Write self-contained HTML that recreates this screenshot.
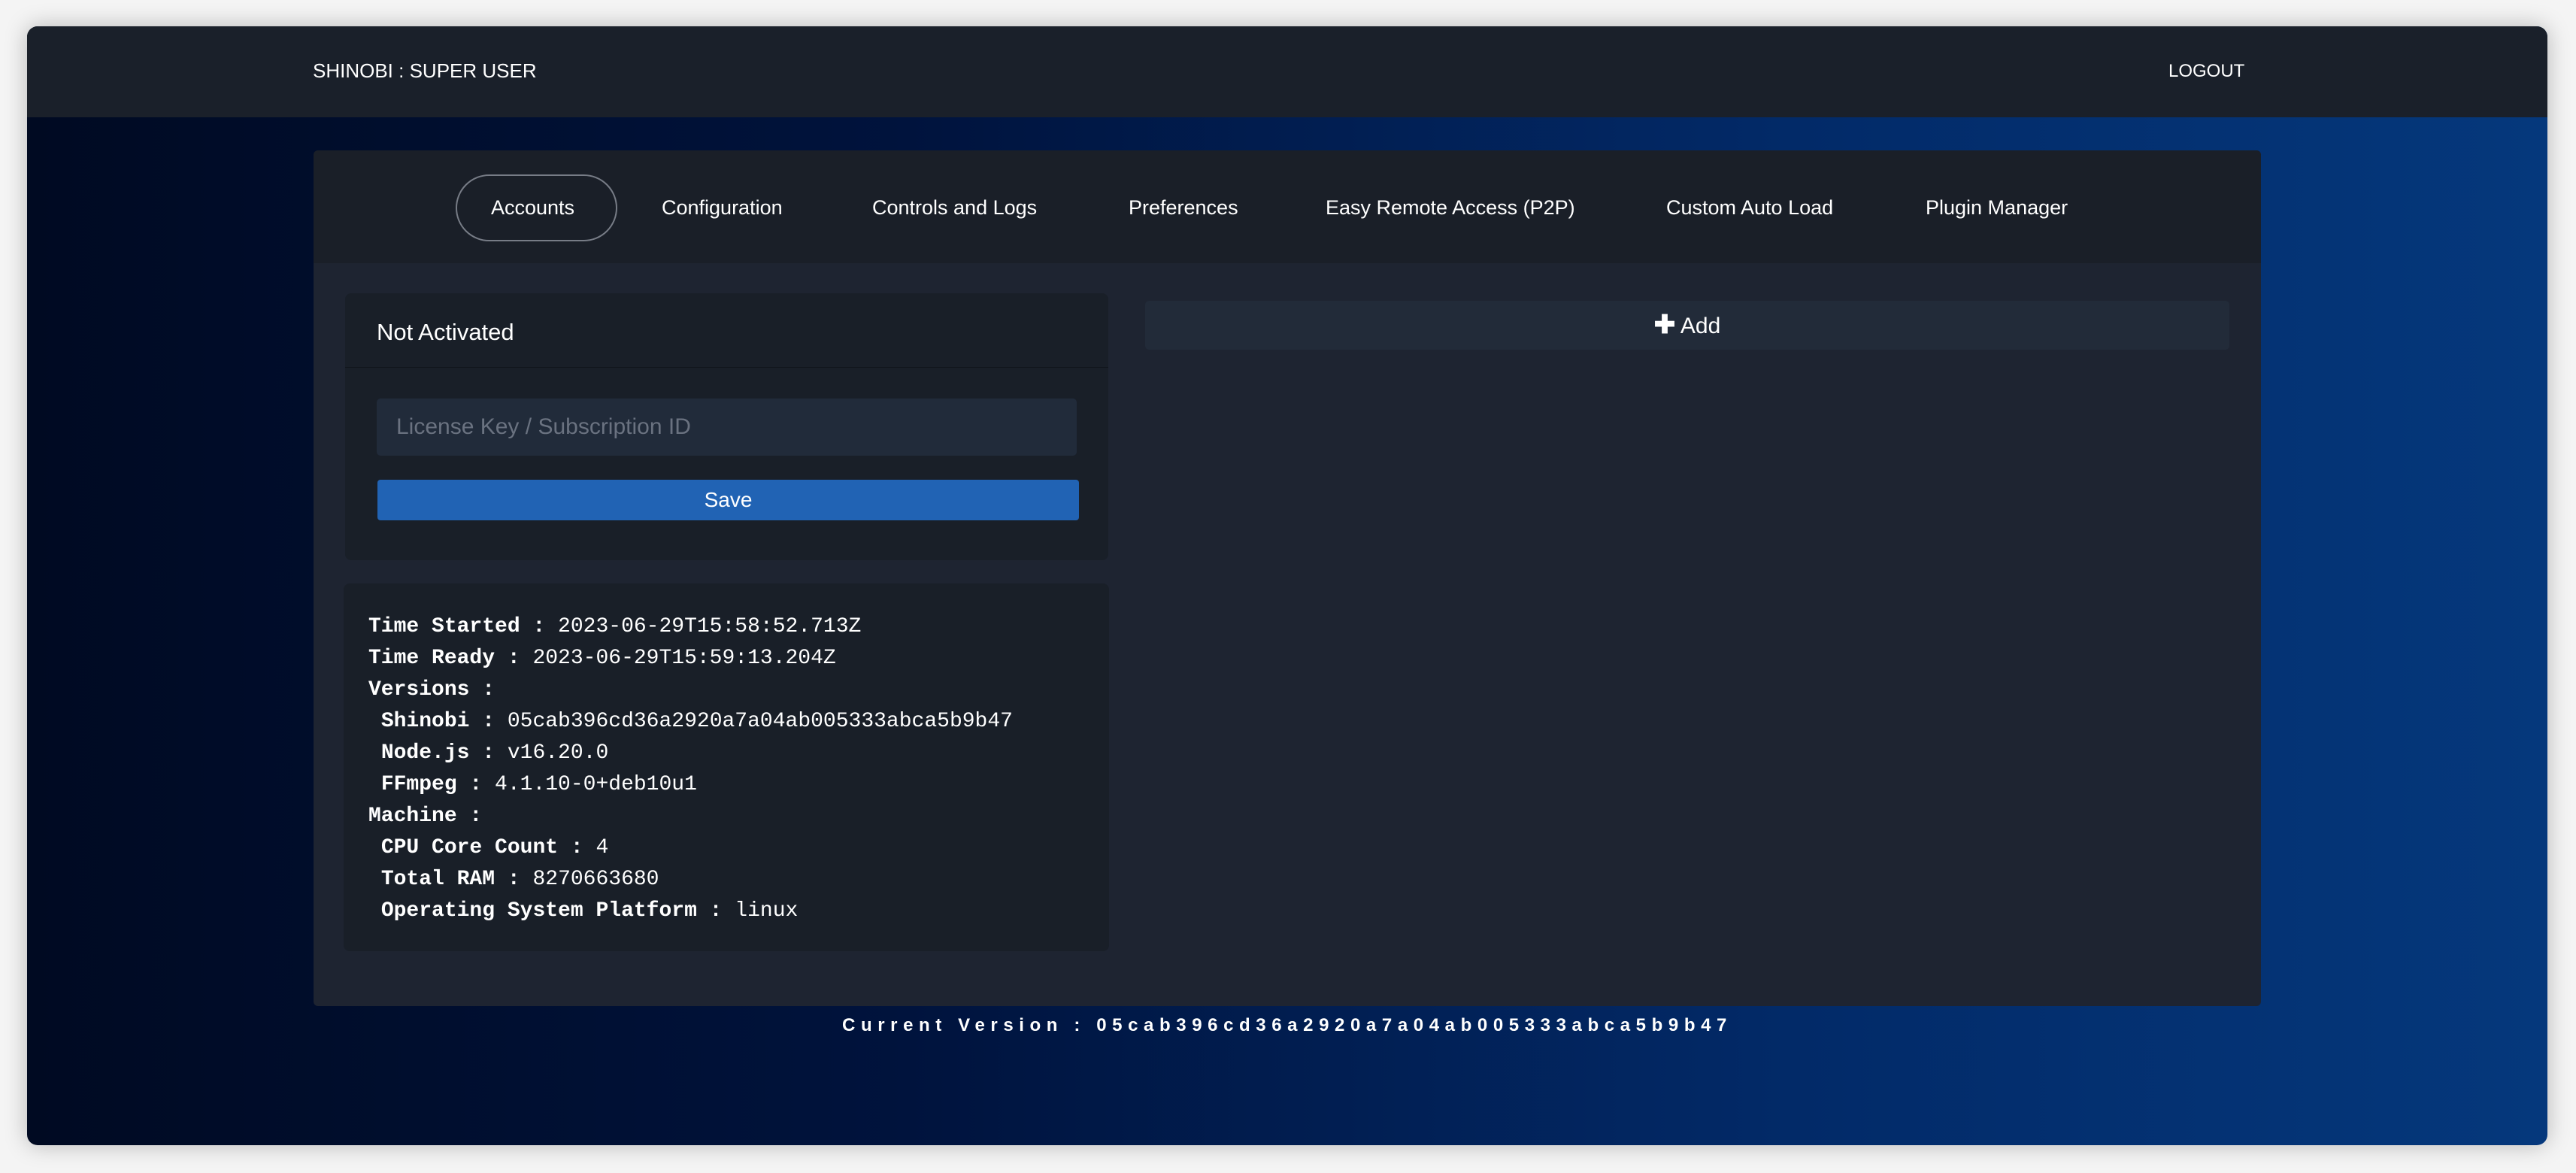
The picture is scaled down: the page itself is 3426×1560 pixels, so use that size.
<!DOCTYPE html>
<html><head><meta charset="utf-8"><style>
*{box-sizing:border-box;margin:0;padding:0}
body{width:3426px;height:1560px;background:#f4f4f4;font-family:"Liberation Sans",sans-serif;color:#fff;position:relative;overflow:hidden}
.win{position:absolute;left:36px;top:35px;width:3352px;height:1488px;border-radius:14px;overflow:hidden;box-shadow:0 0 30px rgba(0,0,0,.25);background:linear-gradient(90deg,#000a22 0%,#00133d 35%,#022a68 70%,#05387c 100%)}
.hdr{position:absolute;left:0;top:0;width:100%;height:121px;background:#1a202a}
.hdr .t{position:absolute;left:380px;top:44px;font-size:26px}
.hdr .l{position:absolute;left:2848px;top:46px;font-size:24px}
.card{position:absolute;left:381px;top:165px;width:2590px;height:1138px;background:#1e2431;border-radius:6px;overflow:hidden}
.tabs{position:absolute;left:0;top:0;width:100%;height:150px;background:#1a1f28}
.tab{position:absolute;top:60px;font-size:27px;line-height:32px;white-space:nowrap}
.pill{position:absolute;left:189px;top:32px;width:215px;height:89px;border:2px solid #777c86;border-radius:45px}
.lp{position:absolute;left:42px;top:190px;width:1015px;height:355px;background:#191f28;border-radius:8px}
.lp .h{position:absolute;left:42px;top:34px;font-size:31px}
.lp .line{position:absolute;left:0;top:98px;width:100%;height:1px;background:#10141b}
.inp{position:absolute;left:42px;top:140px;width:931px;height:76px;background:#212b3a;border-radius:5px;color:#6a7280;font-size:30px;padding:21px 0 0 26px}
.save{position:absolute;left:43px;top:248px;width:933px;height:54px;background:#2163b4;border-radius:4px;text-align:center;font-size:28px;line-height:54px}
.ip{position:absolute;left:40px;top:576px;width:1018px;height:489px;background:#191f28;border-radius:8px;font-family:"Liberation Mono",monospace;font-size:28px;line-height:42px;padding:37px 0 0 33px;white-space:pre}
.ip b{font-weight:bold}
.add{position:absolute;left:1106px;top:200px;width:1442px;height:65px;background:#222b39;border-radius:5px;text-align:center;font-size:30px;line-height:65px}
.ver{position:absolute;left:0;width:3352px;top:1315px;text-align:center;font-size:24px;font-weight:bold;letter-spacing:7.6px}
</style></head><body>
<div class="win">
 <div class="hdr"><div class="t">SHINOBI : SUPER USER</div><div class="l">LOGOUT</div></div>
 <div class="card">
  <div class="tabs">
   <div class="pill"></div>
   <div class="tab" style="left:236px">Accounts</div>
   <div class="tab" style="left:463px">Configuration</div>
   <div class="tab" style="left:743px">Controls and Logs</div>
   <div class="tab" style="left:1084px">Preferences</div>
   <div class="tab" style="left:1346px">Easy Remote Access (P2P)</div>
   <div class="tab" style="left:1799px">Custom Auto Load</div>
   <div class="tab" style="left:2144px">Plugin Manager</div>
  </div>
  <div class="lp"><div class="h">Not Activated</div><div class="line"></div>
   <div class="inp">License Key / Subscription ID</div>
   <div class="save">Save</div></div>
  <div class="ip"><b>Time Started :</b> 2023-06-29T15:58:52.713Z
<b>Time Ready :</b> 2023-06-29T15:59:13.204Z
<b>Versions :</b>
 <b>Shinobi :</b> 05cab396cd36a2920a7a04ab005333abca5b9b47
 <b>Node.js :</b> v16.20.0
 <b>FFmpeg :</b> 4.1.10-0+deb10u1
<b>Machine :</b>
 <b>CPU Core Count :</b> 4
 <b>Total RAM :</b> 8270663680
 <b>Operating System Platform :</b> linux</div>
  <div class="add"><b style="font-size:34px">✚</b> Add</div>
 </div>
 <div class="ver">Current Version : 05cab396cd36a2920a7a04ab005333abca5b9b47</div>
</div>
</body></html>
